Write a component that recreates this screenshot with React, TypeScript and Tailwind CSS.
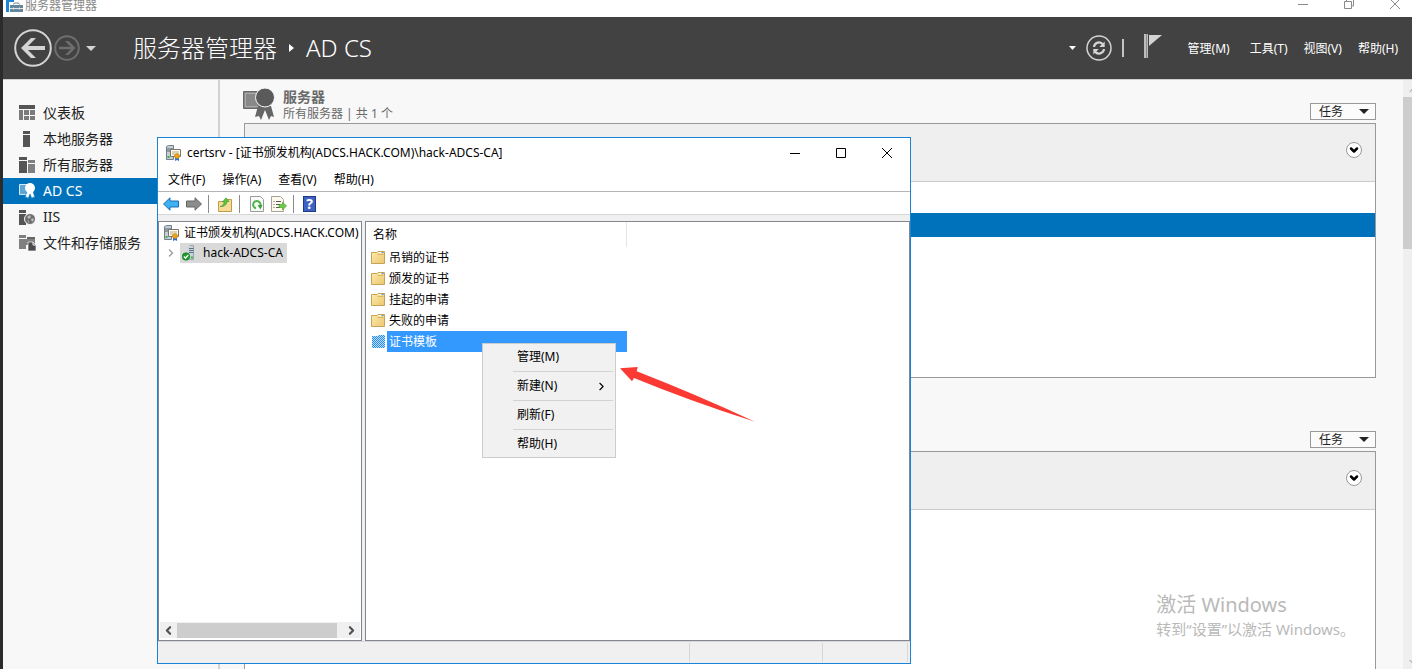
import type { ReactNode } from "react"
import { ChevronDown, ChevronLeft, ChevronRight, ChevronUp } from "lucide-react"

const navItems = [
  { label: "仪表板", icon: <DashboardIcon /> },
  { label: "本地服务器", icon: <LocalServerIcon /> },
  { label: "所有服务器", icon: <AllServersIcon /> },
  { label: "AD CS", icon: <RibbonIcon />, active: true },
  { label: "IIS", icon: <IisIcon /> },
  { label: "文件和存储服务", icon: <StorageIcon /> },
]

const folders = ["吊销的证书", "颁发的证书", "挂起的申请", "失败的申请", "证书模板"]

/* ---------- Server Manager icons ---------- */

function DashboardIcon() {
  return (
    <svg width="16" height="16" viewBox="0 0 16 16">
      <path d="M0 0h16v4H0z" fill="#555" />
      <path d="M0 5h4v10H0zM5 5h5v5H5zM11 5h5v5h-5zM5 11h5v4H5zM11 11h5v4h-5z" fill="#7b7b7b" />
    </svg>
  )
}

function LocalServerIcon() {
  return (
    <svg width="16" height="16" viewBox="0 0 16 16">
      <path d="M4 0h7v3H4zM4 4h7v12H4z" fill="#555" />
    </svg>
  )
}

function AllServersIcon() {
  return (
    <svg width="16" height="16" viewBox="0 0 16 16">
      <path d="M0 0h8v3H0zM0 4h8v12H0z" fill="#555" />
      <path d="M9 3h7v3H9zM9 7h7v9H9z" fill="#808080" />
    </svg>
  )
}

function RibbonIcon() {
  return (
    <svg width="16" height="16" viewBox="0 0 16 16">
      <path d="M.5 1.5h9v10h-9z" fill="#5ea6d8" stroke="#d5e8f5" />
      <path d="M8 8l-2 7 2-1 1 2 2-5 2 5 1-2 2 1-2-7z" fill="#fff" stroke="#0072bc" strokeWidth=".6" />
      <circle cx="11" cy="5" r="5" fill="#fff" />
    </svg>
  )
}

function IisIcon() {
  return (
    <svg width="16" height="16" viewBox="0 0 16 16">
      <path d="M0 1h7v3H0zM0 5h7v11H0z" fill="#555" />
      <circle cx="11" cy="10" r="5.5" fill="#6d6d6d" stroke="#f8f8f8" />
      <path d="M8 8l3-2 1 2-2 2zM12 10l2-1 1 2-2 2zM8 11l2 1v2z" fill="#bbb" />
    </svg>
  )
}

function StorageIcon() {
  return (
    <svg width="17" height="16" viewBox="0 0 17 16">
      <path d="M0 0h7v3H0zM0 4h7v10H0z" fill="#808080" />
      <path d="M8 2h8v4H8z" fill="#666" />
      <path d="M7 4h9v6H7z" fill="#808080" />
      <path d="M9 7h5l3 3v6H9z" fill="#4c4c4c" stroke="#f8f8f8" strokeWidth=".7" />
      <path d="M14 7v3h3" fill="none" stroke="#f8f8f8" />
    </svg>
  )
}

function ServerRoleIcon() {
  return (
    <svg width="32" height="33" viewBox="0 0 32 33">
      <path d="M.5 3.5h20v17H.5z" fill="#888" stroke="#6a6a6a" />
      <path d="M2.500 5.500h16v13h-16z" fill="none" stroke="#aaa" />
      <path d="M15 18l-3 11 4-1 2 4 4-10 4 10 2-4 3 1-3-11z" fill="#666" />
      <circle cx="22" cy="9.500" r="9.500" fill="#5a5a5a" stroke="#f8f8f8" />
    </svg>
  )
}

function AppIcon() {
  return (
    <svg width="18" height="13" viewBox="0 0 18 13">
      <path d="M1 0h8v2H4v10H1z" fill="#1c87d9" />
      <path d="M5 5h13v7H5z" fill="#66879b" />
      <path d="M8.500 4.500L9.500 3h4l1 1.500" fill="none" stroke="#66879b" />
      <path d="M5 8.500h13M8.500 7.500v2M14.500 7.500v2" fill="none" stroke="#dbe6ec" />
    </svg>
  )
}

function Caret({ className = "" }: { className?: string }) {
  return (
    <svg width="10" height="5" viewBox="0 0 10 5" className={className} fill="currentColor">
      <path d="M0 0h10L5 5z" />
    </svg>
  )
}

/* ---------- certsrv icons ---------- */

function CertSrvIcon() {
  return (
    <svg width="16" height="16" viewBox="0 0 16 16" className="shrink-0">
      <path d="M.5 1.5l2-1h5v14h-7z" fill="#c3ced6" stroke="#71808b" />
      <path d="M1 4h6M1 6h4" stroke="#536572" />
      <path d="M1.500 12h2" stroke="#3cb43c" strokeWidth="2" />
      <path d="M4.500 4.500h10v7h-10z" fill="#fffef4" stroke="#7d7565" />
      <path d="M6 7h7M6 9h3" stroke="#b7a778" />
      <path d="M9 12v4l2-1 2 1v-4z" fill="#2b6fd6" />
      <circle cx="11" cy="11" r="2.500" fill="#e9a51e" stroke="#b97c10" strokeWidth=".6" />
    </svg>
  )
}

function CaServerIcon() {
  return (
    <svg width="16" height="16" viewBox="0 0 16 16" className="shrink-0">
      <path d="M6 2l1.500-1.500h4v14H6z" fill="#c9d4dc" />
      <path d="M7.500.500h4v14h-4" fill="none" stroke="#9aa7b0" />
      <path d="M7 3.500h4.500M7 5.500h4.500M7 7.500h4.500" stroke="#5d6f7c" />
      <path d="M9 12.500h2" stroke="#3cb43c" strokeWidth="2" />
      <circle cx="4" cy="11.500" r="3.800" fill="#1d9a2c" stroke="#0d7a1c" strokeWidth=".6" />
      <path d="M1.900 11.500l1.600 1.700 2.800-3.400" fill="none" stroke="#fff" strokeWidth="1.300" />
    </svg>
  )
}

function ToolArrow({ flip, fill, stroke }: { flip?: boolean; fill: string; stroke: string }) {
  return (
    <svg width="16" height="14" viewBox="0 0 16 14">
      <path
        d={flip ? "M15.500 7L9 .800V4H.500v6H9v3.200z" : "M.500 7L7 .800V4h8.500v6H7v3.200z"}
        fill={fill}
        stroke={stroke}
      />
    </svg>
  )
}

function UpFolderIcon() {
  return (
    <svg width="14" height="15" viewBox="0 0 14 15">
      <path d="M.5 4.500H7l1-2h5.500v12H.5z" fill="#f6dc98" stroke="#c49b45" />
      <path d="M2 9.500c2.500-.5 4-2 4.200-4.500H4.500L8 .800 11 4.500H9c0 3-3 5.500-7 5z" fill="#5cc23f" stroke="#3a9430" strokeWidth=".6" />
    </svg>
  )
}

function RefreshPageIcon() {
  return (
    <svg width="14" height="16" viewBox="0 0 14 16">
      <path d="M.5.5h10l3 3v12H.5z" fill="#fafafa" stroke="#9a9a9a" />
      <path d="M6 12.300a3.700 3.700 0 1 1 4.300-2.300" fill="none" stroke="#4db548" strokeWidth="2" />
      <path d="M7.500 9h5l-2 4.500z" fill="#37a93c" />
    </svg>
  )
}

function ExportListIcon() {
  return (
    <svg width="16" height="16" viewBox="0 0 16 16">
      <path d="M.5.5h9l3 3v12H.5z" fill="#fdf9ec" stroke="#a7a398" />
      <path d="M2.500 5.500h1M2.500 8.500h1M2.500 11.500h1M5 5.500h5M5 8.500h4M5 11.500h4" stroke="#555" />
      <path d="M8 8.500h3.500V6l4 4-4 4v-2.500H8z" fill="#6ccc4a" stroke="#439d2a" strokeWidth=".6" />
    </svg>
  )
}

function HelpIcon() {
  return (
    <span className="flex h-4 w-[13px] items-center justify-center border border-[#1c3a86] bg-[#3d62c4] text-sm font-bold leading-none text-white">
      ?
    </span>
  )
}

function FolderIcon({ selected }: { selected?: boolean }) {
  return (
    <svg width="15" height="14" viewBox="0 0 15 14" className="shrink-0">
      <defs>
        <linearGradient id="folder" x1="0" y1="0" x2="1" y2="1">
          <stop offset="0" stopColor="#fdebae" />
          <stop offset="1" stopColor="#ecc66e" />
        </linearGradient>
        <pattern id="dither" width="2" height="2" patternUnits="userSpaceOnUse">
          <path d="M0 0h1v1H0zM1 1h1v1H1z" fill="#1f8fff" />
        </pattern>
      </defs>
      {selected ? (
        <>
          <path d="M1 1h6V0h7v13H1z" fill="#c4dcea" />
          <path d="M1 1h6V0h7v13H1z" fill="url(#dither)" />
        </>
      ) : (
        <>
          <path d="M.5 1.500h5.500l1-1h6.500v12H.5z" fill="url(#folder)" stroke="#c7a357" />
          <path d="M6.500 3.500h6" stroke="#d9b768" />
          <path d="M8 1.500h4" stroke="#fff" />
          <path d="M10.500 1.500h2" stroke="#4a94d8" />
        </>
      )}
    </svg>
  )
}

/* ---------- Server Manager ---------- */

function TitleBar() {
  return (
    <div className="flex h-[17px] shrink-0 items-start bg-white pl-0.5 text-xs text-[#8a8a8a]">
      <AppIcon />
      <span className="ml-0.5 flex-1 leading-3">服务器管理器</span>
      <div className="flex gap-[34px] pr-[11px]">
        <button aria-label="最小化">
          <svg width="12" height="12" viewBox="0 0 12 12" stroke="#8a8a8a">
            <path d="M1 4.500h10" />
          </svg>
        </button>
        <button aria-label="还原">
          <svg width="12" height="12" viewBox="0 0 12 12" stroke="#8a8a8a" fill="none">
            <path d="M1.500 1.500h7v7h-7zM3.500 1V-1h7v7H9" />
          </svg>
        </button>
        <button aria-label="关闭">
          <svg width="12" height="12" viewBox="0 0 12 12" stroke="#8a8a8a">
            <path d="M1-1l10 10M11-1L1 9" />
          </svg>
        </button>
      </div>
    </div>
  )
}

function Header() {
  return (
    <header className="flex h-[63px] shrink-0 items-center border-b border-[#cfcfcf] bg-[#424242] pl-[11px] pr-3.5 text-white">
      <button aria-label="后退">
        <svg width="38" height="38" viewBox="0 0 38 38" fill="none" stroke="#d4d4d4">
          <circle cx="19" cy="19" r="17.800" strokeWidth="2" />
          <path d="M31 19H10" strokeWidth="4" />
          <path d="M22 9h-5L7 19l10 10h5l-10-10z" fill="#d4d4d4" stroke="none" />
        </svg>
      </button>
      <button aria-label="前进" className="ml-0.5">
        <svg width="26" height="26" viewBox="0 0 26 26" fill="none" stroke="#6e6e6e">
          <circle cx="13" cy="13" r="11.800" strokeWidth="2" />
          <path d="M5 13h14" strokeWidth="2.500" />
          <path d="M11 6h3.500l7 7-7 7H11l7-7z" fill="#6e6e6e" stroke="none" />
        </svg>
      </button>
      <Caret className="ml-1.5 text-[#d4d4d4]" />
      <h1 className="ml-[37px] flex flex-1 items-center text-2xl font-light">
        服务器管理器
        <svg width="5" height="8" viewBox="0 0 5 8" className="ml-3 mr-3" fill="#fff">
          <path d="M0 0l5 4-5 4z" />
        </svg>
        AD CS
      </h1>
      <svg width="7" height="4" viewBox="0 0 7 4" fill="#fff">
        <path d="M0 0h7L3.500 4z" />
      </svg>
      <button aria-label="刷新" className="ml-2.5">
        <svg width="26" height="26" viewBox="0 0 26 26" fill="none" stroke="#d4d4d4">
          <circle cx="13" cy="13" r="12" strokeWidth="1.500" />
          <path d="M8 12a5 5 0 0 1 9-2.500M18 14a5 5 0 0 1-9 2.500" strokeWidth="2.200" />
          <path d="M18.700 6.500v5.500h-5.500zM7.300 19.500V14h5.500z" fill="#d4d4d4" stroke="none" />
        </svg>
      </button>
      <span className="ml-2.5 h-[18px] w-0.5 bg-[#c4c4c4]" />
      <button aria-label="通知" className="ml-5">
        <svg width="18" height="28" viewBox="0 0 18 28">
          <path d="M0 0h4v24H0z" fill="#bdbdbd" />
          <path d="M2.500 0v24" stroke="#8a8a8a" />
          <path d="M5 1h13L5 12z" fill="#d4d4d4" />
        </svg>
      </button>
      <nav className="ml-[26px] flex pt-0.5 text-xs">
        <button className="mr-5">管理(M)</button>
        <button className="mr-4">工具(T)</button>
        <button className="mr-4">视图(V)</button>
        <button>帮助(H)</button>
      </nav>
    </header>
  )
}

function Sidebar() {
  return (
    <nav className="w-[217px] shrink-0 border-r-2 border-[#d2d2d2] bg-[#f8f8f8] pt-5">
      {navItems.map((item) => (
        <a
          key={item.label}
          href="#"
          className={`flex h-[26px] items-center pl-4 text-sm ${
            item.active ? "bg-[#0072bc] text-white" : "text-[#222]"
          }`}
        >
          <span className="mr-2 w-4">{item.icon}</span>
          {item.label}
        </a>
      ))}
    </nav>
  )
}

function Tile({ heading, className, children }: { heading?: ReactNode; className: string; children?: ReactNode }) {
  return (
    <section>
      <div className="flex h-[43px] items-end">
        <div className="flex-1">{heading}</div>
        <button className="mb-[3px] flex h-[17px] w-[66px] items-center justify-between border border-[#999] bg-[#fbfbfb] pl-2 pr-1.5 text-xs leading-none text-[#222]">
          任务
          <Caret />
        </button>
      </div>
      <div className={`border border-[#999] bg-white ${className}`}>
        <div className="flex h-[58px] items-center justify-end border-b border-[#ccc] bg-[#efefef] pb-1.5 pr-[13px]">
          <button
            aria-label="展开"
            className="flex h-4 w-4 items-center justify-center rounded-full border border-[#999] bg-white text-black"
          >
            <ChevronDown size={12} strokeWidth={5} />
          </button>
        </div>
        {children}
      </div>
    </section>
  )
}

function Main() {
  return (
    <main className="min-w-0 flex-1 overflow-hidden bg-[#f8f8f8] pl-6 pr-[27px]">
      <Tile
        className="h-[255px]"
        heading={
          <div className="-ml-px flex h-[43px] items-start gap-2 pt-2">
            <ServerRoleIcon />
            <div className="text-[#6a6a6a]">
              <h2 className="text-sm font-bold leading-[17px]">服务器</h2>
              <p className="text-xs leading-[17px]">所有服务器 | 共 1 个</p>
            </div>
          </div>
        }
      >
        <div className="mt-[31px] h-6 bg-[#0072bc]" />
      </Tile>
      <div className="h-[30px]" />
      <Tile className="h-screen" />
    </main>
  )
}

function PageScrollbar() {
  return (
    <div className="flex w-[9px] shrink-0 flex-col items-start overflow-hidden bg-[#efefef] text-[#8a8a8a]">
      <ChevronUp size={12} className="ml-1 mt-1 mb-px shrink-0" />
      <div className="h-[152px] w-full shrink-0 bg-[#cdcdcd]" />
      <ChevronDown size={12} className="mb-px ml-1 mt-auto shrink-0" />
    </div>
  )
}

/* ---------- certsrv console ---------- */

function ContextMenu() {
  const items = ["管理(M)", "新建(N)", "刷新(F)", "帮助(H)"]
  return (
    <div
      role="menu"
      className="absolute left-[324px] top-[205px] w-[134px] bg-[#f1f1f1] pl-[31px] pr-[3px] ring-1 ring-inset ring-[#ccc]"
    >
      {items.map((label, i) => (
        <div key={label}>
          {i > 0 && <div className="h-px bg-[#d2d2d2]" />}
          <button role="menuitem" className="flex h-7 w-full items-center justify-between pl-1 pr-[5px]">
            {label}
            {i === 1 && <ChevronRight size={13} />}
          </button>
        </div>
      ))}
    </div>
  )
}

function PointerArrow() {
  return (
    <svg width="135" height="60" viewBox="0 0 135 60" className="absolute left-[462px] top-[227px]">
      <path d="M0 3.300L17.700 2 16.700 6.300Q75 29 135.500 57 70 36 14 13L12 16.300z" fill="#fb3a34" />
    </svg>
  )
}

function TreePane() {
  return (
    <div className="flex w-[204px] shrink-0 flex-col overflow-hidden border border-[#828790] bg-white">
      <div className="flex h-[21px] items-center whitespace-nowrap pl-[5px]">
        <CertSrvIcon />
        <span className="ml-1">证书颁发机构(ADCS.HACK.COM)</span>
      </div>
      <div className="flex h-5 items-center pl-1.5">
        <ChevronRight size={12} strokeWidth={3} className="mr-[3px] text-[#a0a0a0]" />
        <span className="flex h-full items-center bg-[#d9d9d9] pl-0.5 pr-1">
          <CaServerIcon />
          <span className="ml-[5px]">hack-ADCS-CA</span>
        </span>
      </div>
      <div className="mx-px mb-0.5 mt-auto flex h-4 items-center bg-[#f0f0f0] text-[#505050]">
        <ChevronLeft size={13} strokeWidth={4} className="mx-0.5" />
        <div className="h-[15px] w-[160px] bg-[#cdcdcd]" />
        <ChevronRight size={13} strokeWidth={4} className="ml-auto mr-0.5" />
      </div>
    </div>
  )
}

function ListPane() {
  return (
    <div className="min-w-0 flex-1 border border-[#828790] bg-white">
      <table className="w-[261px] border-collapse">
        <thead>
          <tr>
            <th className="h-[25px] border-r border-[#e5e5e5] p-0 pl-[7px] text-left font-normal">名称</th>
          </tr>
        </thead>
        <tbody>
          {folders.map((name, i) => {
            const selected = i === folders.length - 1
            return (
              <tr key={name}>
                <td className="h-[21px] p-0 pl-[5px]">
                  <div className="flex h-[21px] items-center">
                    <FolderIcon selected={selected} />
                    <span
                      className={`ml-px flex h-full flex-1 items-center pl-0.5 ${
                        selected ? "bg-[#3399ff] text-white" : ""
                      }`}
                    >
                      {name}
                    </span>
                  </div>
                </td>
              </tr>
            )
          })}
        </tbody>
      </table>
    </div>
  )
}

function CertSrvWindow() {
  return (
    <div className="absolute left-[154px] top-[137px] flex h-[527px] w-[754px] flex-col border border-[#1883d7] bg-[#f0f0f0] text-xs text-black">
      <div className="flex h-[29px] shrink-0 items-center bg-white pl-2">
        <CertSrvIcon />
        <span className="ml-[5px] flex-1">certsrv - [证书颁发机构(ADCS.HACK.COM)\hack-ADCS-CA]</span>
        <div className="flex gap-[34px] pr-[17px]">
          <button aria-label="最小化">
            <svg width="12" height="12" viewBox="0 0 12 12" stroke="#000">
              <path d="M1 6.500h10" />
            </svg>
          </button>
          <button aria-label="最大化">
            <svg width="12" height="12" viewBox="0 0 12 12" stroke="#000" fill="none">
              <path d="M1.500 1.500h9v9h-9z" />
            </svg>
          </button>
          <button aria-label="关闭">
            <svg width="12" height="12" viewBox="0 0 12 12" stroke="#000">
              <path d="M1 1l10 10M11 1L1 11" />
            </svg>
          </button>
        </div>
      </div>
      <div className="flex h-[25px] shrink-0 items-center gap-[17px] border-b border-[#b4b4b9] bg-white pl-2.5 pt-0.5">
        <button>文件(F)</button>
        <button>操作(A)</button>
        <button>查看(V)</button>
        <button>帮助(H)</button>
      </div>
      <div className="flex h-[23px] shrink-0 items-center border-b border-[#d7d7d7] bg-white pl-[5px] pt-0.5">
        <button aria-label="后退">
          <ToolArrow fill="#3fb1f0" stroke="#1c6fb5" />
        </button>
        <button aria-label="前进" className="ml-[7px]">
          <ToolArrow flip fill="#8d8d8d" stroke="#666" />
        </button>
        <span className="ml-1.5 h-[18px] w-px bg-[#8a8a8a]" />
        <button aria-label="上移" className="ml-[9px]">
          <UpFolderIcon />
        </button>
        <span className="ml-[7px] h-[18px] w-px bg-[#8a8a8a]" />
        <button aria-label="刷新" className="ml-2.5">
          <RefreshPageIcon />
        </button>
        <button aria-label="导出列表" className="ml-[7px]">
          <ExportListIcon />
        </button>
        <span className="ml-1.5 h-[18px] w-px bg-[#8a8a8a]" />
        <button aria-label="帮助" className="ml-[9px]">
          <HelpIcon />
        </button>
      </div>
      <div className="mt-1.5 flex min-h-0 flex-1 gap-[3px]">
        <TreePane />
        <ListPane />
      </div>
      <div className="flex h-[22px] shrink-0 justify-end border-t border-[#d7d7d7] pr-0.5 pt-px">
        <span className="h-[19px] w-[133px] border-l border-[#d7d7d7]" />
        <span className="h-[19px] w-[86px] border-x border-[#d7d7d7]" />
      </div>
      <ContextMenu />
      <PointerArrow />
    </div>
  )
}

export default function App() {
  return (
    <div className="relative flex h-screen flex-col overflow-hidden border-l-[3px] border-[#2b2b2b] bg-[#f8f8f8] font-['Noto_Sans','Noto_Sans_CJK_SC',sans-serif]">
      <TitleBar />
      <Header />
      <div className="flex min-h-0 flex-1">
        <Sidebar />
        <Main />
        <PageScrollbar />
      </div>
      <div className="absolute bottom-7 right-[57px] text-[#b9b9b9]">
        <p className="text-xl leading-6">激活 Windows</p>
        <p className="text-[15px] leading-6">转到“设置”以激活 Windows。</p>
      </div>
      <CertSrvWindow />
    </div>
  )
}
